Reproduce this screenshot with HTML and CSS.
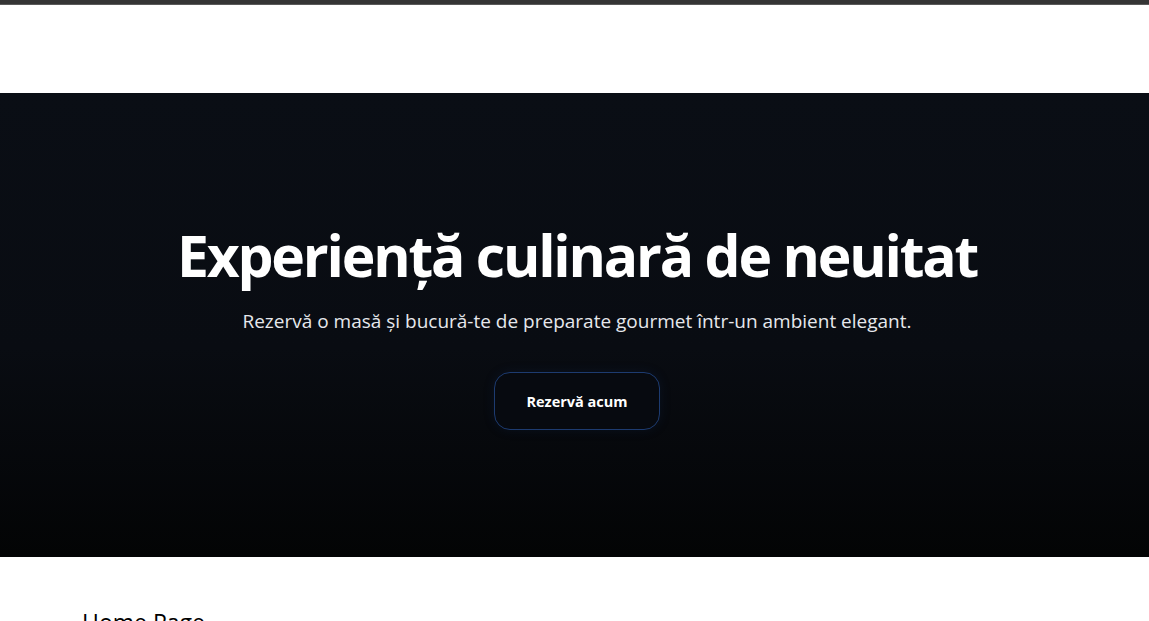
FILE: index.html
```html
<!DOCTYPE html>
<html lang="ro">
<head>
<meta charset="utf-8">
<title>Home Page</title>
<link rel="stylesheet" href="styles.css">
</head>
<body>
<div class="topbar"></div>
<header class="header"></header>
<section class="hero">
  <h1 class="hero-title">Experiență culinară de neuitat</h1>
  <p class="hero-sub">Rezervă o masă și bucură-te de preparate gourmet într-un ambient elegant.</p>
  <a class="hero-btn" href="#">Rezervă acum</a>
</section>
<main class="content">
  <h2 class="page-title">Home Page</h2>
</main>
</body>
</html>
```
FILE: styles.css
```css
* { box-sizing: border-box; }
html, body { margin: 0; padding: 0; }
body {
  font-family: "Open Sans", "Noto Sans", sans-serif;
  background: #fff;
  color: #000;
}
.topbar {
  height: 5px;
  background: #353535;
  border-bottom: 1px solid #5a5a5a;
}
.header {
  height: 88px;
  background: #fff;
}
.hero {
  height: 464px;
  background: linear-gradient(180deg, #0a0e15 0%, #090c12 55%, #030405 100%);
  display: flex;
  flex-direction: column;
  align-items: center;
  justify-content: center;
  text-align: center;
  color: #fff;
  padding: 3px 0 0 5px;
}
.hero-title {
  margin: 0;
  font-size: 57px;
  font-weight: 700;
  letter-spacing: -2.2px;
  line-height: 64px;
}
.hero-sub {
  margin: 21px 0 0;
  font-size: 19px;
  line-height: 26px;
  color: #e6e8ec;
  letter-spacing: 0;
}
.hero-btn {
  margin-top: 38px;
  width: 166px;
  height: 58px;
  display: flex;
  align-items: center;
  justify-content: center;
  border: 1px solid #1d3b70;
  border-radius: 16px;
  background: #070a10;
  color: #fff;
  font-size: 14.5px;
  font-weight: 700;
  text-decoration: none;
  box-shadow: 0 0 12px rgba(30, 60, 120, 0.15);
}
.content {
  padding: 49px 82px 0;
}
.page-title {
  margin: 0;
  font-size: 23px;
  font-weight: 400;
}
```
